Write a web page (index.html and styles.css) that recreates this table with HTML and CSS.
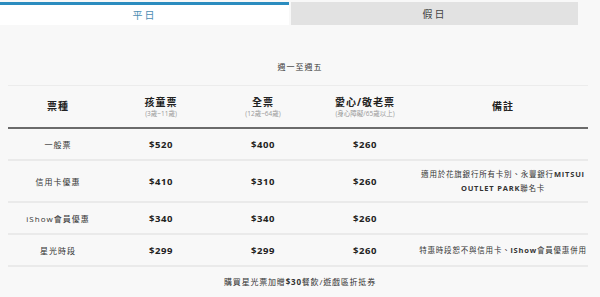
FILE: index.html
```html
<!DOCTYPE html>
<html lang="zh-Hant">
<head>
<meta charset="utf-8">
<link rel="stylesheet" href="styles.css">
</head>
<body>
<div class="page">
  <div class="tabs">
    <div class="tab tab-active">平日</div>
    <div class="tab tab-idle">假日</div>
  </div>
  <div class="caption">週一至週五</div>
  <table class="prices">
    <colgroup>
      <col class="c1"><col class="c2"><col class="c3"><col class="c4"><col class="c5">
    </colgroup>
    <thead>
      <tr>
        <th>票種</th>
        <th>孩童票<span class="sub">(3歲~11歲)</span></th>
        <th>全票<span class="sub">(12歲~64歲)</span></th>
        <th>愛心/敬老票<span class="sub">(身心障礙/65歲以上)</span></th>
        <th>備註</th>
      </tr>
    </thead>
    <tbody>
      <tr><td class="name">一般票</td><td class="num">$520</td><td class="num">$400</td><td class="num">$260</td><td class="note"></td></tr>
      <tr class="tall"><td class="name">信用卡優惠</td><td class="num">$410</td><td class="num">$310</td><td class="num">$260</td><td class="note"><span class="line">適用於花旗銀行所有卡別、永豐銀行<b>MITSUI</b></span><span class="line"><b>OUTLET PARK</b>聯名卡</span></td></tr>
      <tr><td class="name">iShow會員優惠</td><td class="num">$340</td><td class="num">$340</td><td class="num">$260</td><td class="note"></td></tr>
      <tr><td class="name">星光時段</td><td class="num">$299</td><td class="num">$299</td><td class="num">$260</td><td class="note">特惠時段恕不與信用卡、<b>iShow</b>會員優惠併用</td></tr>
    </tbody>
  </table>
  <div class="footer">購買星光票加贈<b>$30</b>餐飲/遊戲區折抵券</div>
</div>
</body>
</html>
```
FILE: styles.css
```css
html, body {
  margin: 0;
  padding: 0;
  background: #f8f8f8;
}
body {
  font-family: "Open Sans", "Noto Sans CJK TC", sans-serif;
  color: #333;
  width: 600px;
  height: 297px;
  overflow: hidden;
}
.page {
  display: flex;
  flex-direction: column;
}
.tabs {
  display: flex;
  gap: 2px;
  padding-top: 2px;
  width: 578px;
}
.tab {
  height: 23px;
  display: flex;
  align-items: center;
  justify-content: center;
  font-size: 10px;
  letter-spacing: 2px;
  box-sizing: border-box;
}
.tab-active {
  width: 289px;
  background: #ffffff;
  border-top: 3px solid #2b8cbf;
  color: #4c8db3;
  padding-bottom: 1px;
}
.tab-idle {
  flex: 1;
  background: #e2e2e2;
  color: #444;
}
.caption {
  text-align: center;
  font-size: 8px;
  letter-spacing: 1px;
  color: #333;
  margin-top: 36px;
  height: 12px;
  line-height: 12px;
}
.prices {
  margin: 12px 0 0 8px;
  width: 580px;
  border-collapse: collapse;
  table-layout: fixed;
}
.c1 { width: 100px; }
.c2 { width: 106px; }
.c3 { width: 98px; }
.c4 { width: 106px; }
.c5 { width: 170px; }
.prices thead tr {
  border-top: 1px solid #ececec;
  border-bottom: 2px solid #6b6b6b;
}
.prices th {
  height: 41px;
  padding: 0;
  font-size: 10px;
  font-weight: 700;
  letter-spacing: 1px;
  color: #222;
  vertical-align: middle;
  line-height: 13px;
}
.sub {
  display: block;
  font-size: 6.5px;
  font-weight: 400;
  color: #999;
  letter-spacing: 0;
  line-height: 9px;
}
.prices tbody tr {
  border-bottom: 2px solid #eaeaea;
}
.prices td {
  height: 30px;
  padding: 0;
  text-align: center;
  vertical-align: middle;
}
.prices tr.tall td {
  height: 40px;
}
.name {
  font-size: 8px;
  letter-spacing: 1px;
  color: #333;
}
.num {
  font-size: 9.5px;
  font-weight: 700;
  letter-spacing: 0.6px;
  color: #222;
}
.note {
  font-size: 7.5px;
  letter-spacing: 0.8px;
  line-height: 14px;
  font-weight: 400;
  color: #333;
  padding: 0 2px;
  white-space: nowrap;
}
.line {
  display: block;
}
.note b {
  font-weight: 700;
}
.footer {
  text-align: center;
  font-size: 8px;
  letter-spacing: 0.8px;
  margin-top: 9px;
  color: #333;
}
.footer b {
  font-weight: 700;
}
```
